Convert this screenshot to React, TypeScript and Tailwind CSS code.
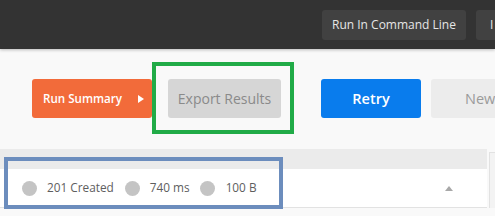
import React from "react";

export default function App() {
  return (
    <div className="relative w-[495px] h-[216px] overflow-hidden bg-[#f9f9f9] font-['Open_Sans',sans-serif]">
      {/* header */}
      <div className="h-[49px] bg-[#333333] flex items-center justify-end gap-[10px] shadow-[0_1px_3px_rgba(0,0,0,0.25)] relative z-10">
        <button className="h-[30px] w-[144px] shrink-0 rounded-[3px] bg-[#414141] text-[#e6e6e6] text-[12px] whitespace-nowrap flex items-center justify-center">
          Run In Command Line
        </button>
        <button className="h-[30px] w-[19px] shrink-0 rounded-l-[3px] bg-[#414141] text-[#e6e6e6] text-[12px] flex items-center pl-[14px] whitespace-nowrap">
          I
        </button>
      </div>

      {/* action buttons */}
      <div className="flex items-center pl-[32px] pt-[30px]">
        <button className="h-[39px] w-[120px] shrink-0 rounded-[3px] bg-[#f26b3a] text-white text-[11.6px] font-semibold whitespace-nowrap flex items-center pl-[11px]">
          <span>Run Summary</span>
          <svg width="6" height="8" viewBox="0 0 6 8" className="ml-[16px]">
            <path d="M0 0 L6 4 L0 8 Z" fill="#ffffff" />
          </svg>
        </button>
        <button className="ml-[16px] h-[39px] w-[113px] shrink-0 rounded-[3px] bg-[#d6d6d6] text-[#8a8a8a] text-[14px] whitespace-nowrap flex items-center justify-center">
          Export Results
        </button>
        <button className="ml-[40px] h-[39px] w-[100px] shrink-0 rounded-[3px] bg-[#097ced] text-white text-[14.5px] font-semibold whitespace-nowrap flex items-center justify-center">
          Retry
        </button>
        <button className="ml-[10px] h-[39px] w-[100px] shrink-0 rounded-l-[3px] bg-[#ececec] text-[#9a9a9a] text-[14.5px] whitespace-nowrap flex items-center pl-[34px]">
          New
        </button>
      </div>

      {/* results area */}
      <div className="flex mt-[31px]">
        <div className="w-[487px] shrink-0">
          <div className="h-[20px] bg-[#ebebeb]" />
          <div className="h-[39px] bg-white border-b border-[#e2e2e2] flex items-center pl-[22px] pr-[34px] text-[11.8px] text-[#5e5e5e] whitespace-nowrap">
            <span className="w-[15px] h-[15px] shrink-0 rounded-full bg-[#c4c4c4]" />
            <span className="ml-[10px]">201 Created</span>
            <span className="ml-[11px] w-[15px] h-[15px] shrink-0 rounded-full bg-[#c4c4c4]" />
            <span className="ml-[10px]">740 ms</span>
            <span className="ml-[10px] w-[15px] h-[15px] shrink-0 rounded-full bg-[#c4c4c4]" />
            <span className="ml-[11px]">100 B</span>
            <svg width="8" height="5" viewBox="0 0 8 5" className="ml-auto">
              <path d="M0 5 L4 0 L8 5 Z" fill="#a8a8a8" />
            </svg>
          </div>
        </div>
        <div className="ml-[2px] mt-[3px] flex-1 bg-[#f3f3f3] border-l border-t border-[#e2e2e2]" />
      </div>

      {/* annotation boxes */}
      <div className="absolute left-[152px] top-[62px] w-[142px] h-[72px] border-[4px] border-[#21ab47]" />
      <div className="absolute left-[4px] top-[157px] w-[279px] h-[52px] border-[4px] border-[#6c8dbd]" />
    </div>
  );
}
